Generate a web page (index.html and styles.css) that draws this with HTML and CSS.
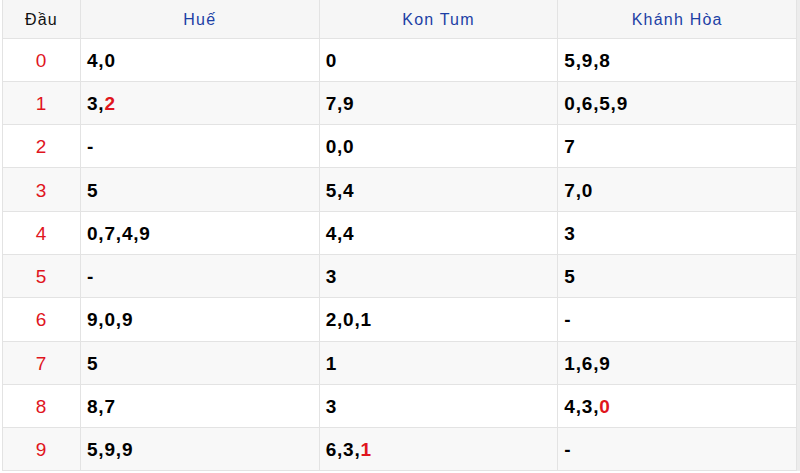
FILE: index.html
```html
<!DOCTYPE html>
<html>
<head>
<meta charset="utf-8">
<link rel="stylesheet" href="styles.css">
</head>
<body>
<div class="wrap">
<table class="loto">
  <thead>
    <tr>
      <th class="dau">Đầu</th>
      <th class="prov">Huế</th>
      <th class="prov">Kon Tum</th>
      <th class="prov">Khánh Hòa</th>
    </tr>
  </thead>
  <tbody>
    <tr><td class="dau">0</td><td>4,0</td><td>0</td><td>5,9,8</td></tr>
    <tr><td class="dau">1</td><td>3,<span class="hl">2</span></td><td>7,9</td><td>0,6,5,9</td></tr>
    <tr><td class="dau">2</td><td>-</td><td>0,0</td><td>7</td></tr>
    <tr><td class="dau">3</td><td>5</td><td>5,4</td><td>7,0</td></tr>
    <tr><td class="dau">4</td><td>0,7,4,9</td><td>4,4</td><td>3</td></tr>
    <tr><td class="dau">5</td><td>-</td><td>3</td><td>5</td></tr>
    <tr><td class="dau">6</td><td>9,0,9</td><td>2,0,1</td><td>-</td></tr>
    <tr><td class="dau">7</td><td>5</td><td>1</td><td>1,6,9</td></tr>
    <tr><td class="dau">8</td><td>8,7</td><td>3</td><td>4,3,<span class="hl">0</span></td></tr>
    <tr><td class="dau">9</td><td>5,9,9</td><td>6,3,<span class="hl">1</span></td><td>-</td></tr>
  </tbody>
</table>
</div>
</body>
</html>
```
FILE: styles.css
```css
html, body {
  margin: 0;
  padding: 0;
  background: #ffffff;
}
body {
  font-family: "Liberation Sans", Arial, sans-serif;
}
.wrap {
  padding-left: 2px;
  width: 795px;
  border-right: 3px solid #ececec;
}
.loto {
  border-collapse: collapse;
  width: 795px;
  table-layout: fixed;
}
.loto th, .loto td {
  border: 1px solid #e3e3e3;
  padding: 0 0 0 6px;
}
.loto thead tr {
  height: 38px;
  background: #f6f6f6;
}
.loto th {
  font-weight: normal;
  font-size: 16px;
  letter-spacing: 1.2px;
  text-align: center;
  padding: 2px 0 0 0;
  border-top: none;
}
.loto th.dau {
  width: 77px;
  color: #111111;
}
.loto th.prov {
  color: #1c3fa5;
}
.loto tbody tr {
  height: 43.3px;
}
.loto tbody tr:nth-child(even) {
  background: #f8f8f8;
}
.loto td {
  font-size: 19px;
  letter-spacing: 0.8px;
  font-weight: bold;
  color: #000000;
  padding-top: 2px;
}
.loto td.dau {
  color: #e0151d;
  font-weight: normal;
  text-align: center;
  padding: 2px 0 0 0;
}
.hl {
  color: #e0151d;
}
```
